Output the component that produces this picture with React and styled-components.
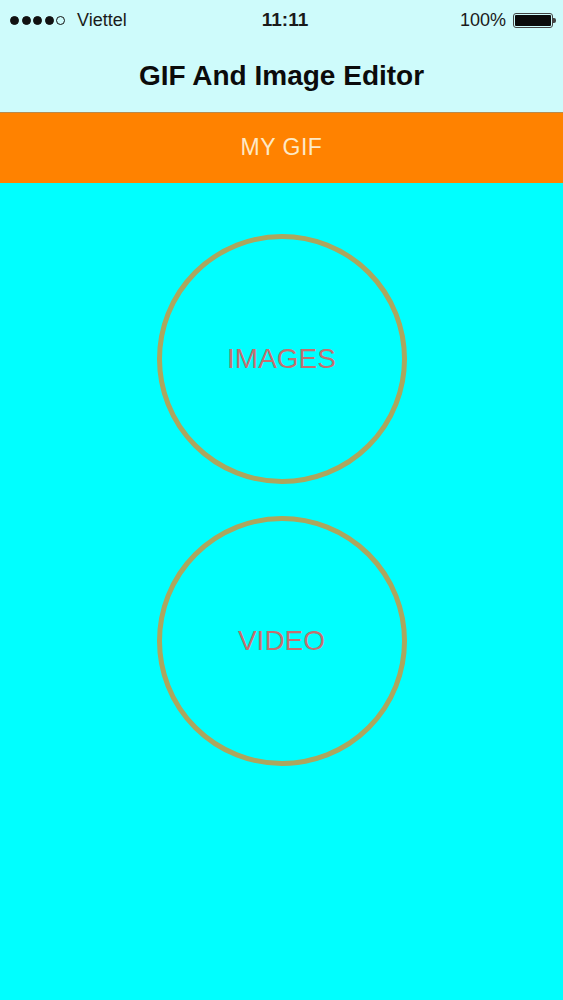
import React from "react";
import styled, { createGlobalStyle } from "styled-components";

const Global = createGlobalStyle`
  html, body { margin: 0; padding: 0; background: #00ffff; }
  body { font-family: "Liberation Sans", Arial, sans-serif; }
  #root { min-height: 100vh; }
`;

const Page = styled.div`
  display: flex;
  flex-direction: column;
  min-height: 100vh;
  background: #00ffff;
`;

const Header = styled.header`
  background: #cefbfb;
  display: flex;
  flex-direction: column;
`;

const StatusBar = styled.div`
  height: 40px;
  display: grid;
  grid-template-columns: 1fr auto 1fr;
  align-items: center;
  padding: 0 7px 0 10px;
  color: #1a1a1a;
  font-size: 18px;
`;

const Left = styled.div`
  display: flex;
  align-items: center;
  gap: 12px;
`;

const Dots = styled.div`
  display: flex;
  gap: 2.5px;
`;

const Dot = styled.span`
  width: 9px;
  height: 9px;
  border-radius: 50%;
  box-sizing: border-box;
  background: ${(p) => (p.$empty ? "transparent" : "#111")};
  border: 1px solid #111;
`;

const Time = styled.div`
  font-weight: 700;
  font-size: 19px;
  padding-left: 4px;
`;

const Right = styled.div`
  display: flex;
  justify-content: flex-end;
  align-items: center;
  gap: 7px;
`;

const Battery = styled.div`
  display: flex;
  align-items: center;
`;

const BatteryBody = styled.div`
  width: 40px;
  height: 15px;
  box-sizing: border-box;
  border: 1.5px solid #444;
  border-radius: 3px;
  padding: 1px;
  & > div {
    width: 100%;
    height: 100%;
    background: #0a0a0a;
    border-radius: 1px;
  }
`;

const BatteryNub = styled.div`
  width: 3px;
  height: 5px;
  background: #444;
  border-radius: 0 2px 2px 0;
`;

const NavBar = styled.div`
  height: 72px;
  display: flex;
  align-items: center;
  justify-content: center;
  font-size: 28px;
  font-weight: 700;
  color: #0b0b0b;
  border-bottom: 1px solid #b98a4c;
`;

const TabBar = styled.div`
  height: 70px;
  background: #ff8200;
  display: flex;
  align-items: center;
  justify-content: center;
  color: #fde9c6;
  font-size: 23px;
  letter-spacing: 0.5px;
  padding-bottom: 2px;
  box-sizing: border-box;
`;

const Content = styled.main`
  flex: 1;
  display: flex;
  flex-direction: column;
  align-items: center;
  gap: 32px;
  padding-top: 51px;
`;

const CircleButton = styled.button`
  width: 250px;
  height: 250px;
  border-radius: 50%;
  border: 5px solid #aca65e;
  background: transparent;
  box-sizing: border-box;
  display: flex;
  align-items: center;
  justify-content: center;
  color: #c27070;
  font-family: "Liberation Sans", Arial, sans-serif;
  font-size: 28px;
  padding: 0;
  cursor: pointer;
`;

export default function App() {
  return (
    <Page>
      <Global />
      <Header>
        <StatusBar>
          <Left>
            <Dots>
              <Dot />
              <Dot />
              <Dot />
              <Dot />
              <Dot $empty />
            </Dots>
            <span>Viettel</span>
          </Left>
          <Time>11:11</Time>
          <Right>
            <span>100%</span>
            <Battery>
              <BatteryBody>
                <div />
              </BatteryBody>
              <BatteryNub />
            </Battery>
          </Right>
        </StatusBar>
        <NavBar>GIF And Image Editor</NavBar>
      </Header>
      <TabBar>MY GIF</TabBar>
      <Content>
        <CircleButton>IMAGES</CircleButton>
        <CircleButton>VIDEO</CircleButton>
      </Content>
    </Page>
  );
}
